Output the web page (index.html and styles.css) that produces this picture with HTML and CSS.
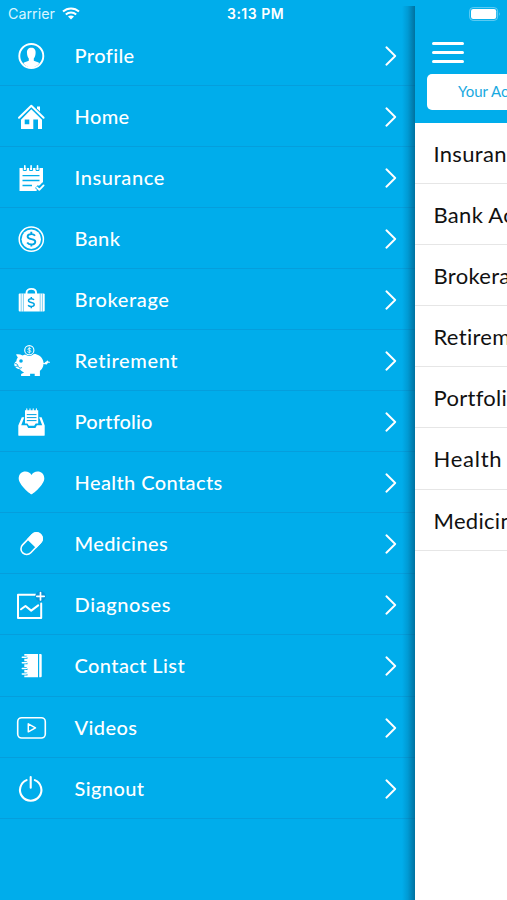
FILE: index.html
```html
<!DOCTYPE html>
<html lang="en">
<head>
<meta charset="utf-8">
<title>Menu</title>
<link rel="stylesheet" href="styles.css">
</head>
<body>
<svg class="defs" aria-hidden="true">
  <symbol id="chev" viewBox="0 0 12 20"><path d="M1.4 1.300 10.2 10 1.4 18.700" fill="none" stroke="#fff" stroke-width="1.9" stroke-linecap="round" stroke-linejoin="round"/></symbol>
</svg>
<div class="screen">
  <nav class="drawer">
    <div class="row"><svg class="icon" viewBox="0 0 40 40"><circle class="line" cx="20.3" cy="20" r="12" stroke-width="1.9"/><path d="M16 17c-.3-3.200 1.400-5.200 4.300-5.200s4.600 2 4.300 5.200c-.1 2.500-.8 4.400-1.800 5.500v2.200c1.600.8 3.800 1.100 5.500 2.200-1.800 2.800-4.800 4.600-8 4.600s-6.200-1.800-8-4.600c1.700-1.100 3.900-1.400 5.500-2.200v-2.200c-1-1.100-1.700-3-1.800-5.500z"/></svg><span class="label">Profile</span><svg class="chev"><use href="#chev"/></svg></div>
    <div class="row"><svg class="icon" viewBox="0 0 40 40"><path class="line" d="m8 20.800 12.300-12 12.300 12" stroke-width="2"/><path d="M26 9.500h3v5l-3-3z"/><path fill-rule="evenodd" d="m20.300 12.300 10.700 10.400V32h-4v-9.500h-4.700V32H10v-9.300zM13.700 22.500v4.700h4.600v-4.700z"/></svg><span class="label">Home</span><svg class="chev"><use href="#chev"/></svg></div>
    <div class="row"><svg class="icon" viewBox="0 0 40 40"><path d="M8.500 10H32v15.500l-5 3-1.500 4.500h-17z"/><g fill="none" stroke="#00adeb" stroke-width="1.300"><path d="M11.500 17.700h17M11.500 22.500h17M11.500 27.500h9.500"/><path d="M12.300 9v3.500h3V9M18.600 9v3.500h3V9M25 9v3.500h3V9" stroke-width="1"/></g><path class="line" d="M13.800 7.800v3M20.100 7.800v3M26.500 7.800v3" stroke-width="1.600"/><path d="m25.500 28.500 2.500 2.500 5-5.500" fill="none" stroke="#00adeb" stroke-width="4"/><path class="line" d="m26 29.500 2.300 2.300 4.300-4.400" stroke-width="1.800"/></svg><span class="label wide">Insurance</span><svg class="chev"><use href="#chev"/></svg></div>
    <div class="row"><svg class="icon" viewBox="0 0 40 40"><circle class="line" cx="20.300" cy="20.200" r="12.100" stroke-width="1.500"/><circle cx="20.300" cy="20.200" r="9.700"/><path class="cut" d="M24 16.800c-.8-1.200-2-1.700-3.700-1.700-2.200 0-3.700.9-3.700 2.500 0 3.600 7.700 1.500 7.700 5.200 0 1.700-1.600 2.700-4 2.700-1.900 0-3.300-.7-4.100-2M20.300 12.800v2.300M20.300 25.300v2.300" stroke-width="1.900"/></svg><span class="label">Bank</span><svg class="chev"><use href="#chev"/></svg></div>
    <div class="row"><svg class="icon" viewBox="0 0 40 40"><path class="line" d="M15.500 14.200v-1.300c0-2.500 2-4 4.800-4s4.800 1.500 4.800 4v1.300" stroke-width="1.900"/><rect x="7.700" y="13.600" width="26" height="18" rx="1"/><path class="cut" d="M10.200 13.500v18.200M12.400 13.500v18.200M29.200 13.500v18.200M31.400 13.500v18.200" stroke-width=".5"/><path class="cut" d="M23 19.900c-.5-.8-1.500-1.200-2.700-1.200-1.700 0-2.800.7-2.800 1.900 0 2.700 5.700 1.200 5.700 4 0 1.200-1.200 2-3 2-1.400 0-2.500-.5-3-1.500M20.300 17v1.700M20.300 26.600v1.700" stroke-width="1.500"/></svg><span class="label wide">Brokerage</span><svg class="chev"><use href="#chev"/></svg></div>
    <div class="row"><svg class="icon" viewBox="0 0 40 40"><path d="M5 13.500c2.500-.4 4.800 0 6.500 1 2.500-1.300 5.600-2 8.800-2 6.300 0 10.500 2.800 11.900 7.400 1 3.700-.3 7.600-3.300 9.900V35h-5.200v-2.300h-4.600V35h-9v-2l3-1.600c-2-.8-3.200-1.800-4.200-3.100-2.300-.2-4.300-1.300-5.300-3.300-.8-2 .1-4 1.800-4.800.1-1.500.7-2.700 1.400-3.600z"/><path class="line" d="M32 22.300c2 .6 3.600-.2 4.300-2m.1-.2c.1 2.300-1.100 3.300-2 2.500s1.200-2.500 3.900-1.300" stroke-width="1.200"/><circle cx="10" cy="20" r="1.800" fill="#00adeb"/><path class="cut" d="M3.500 26.200c1.200-1 2.700-1.100 4-.6.600 1.800 2.100 1.900 3.400.9M4.200 22.500c1.700.2 2.700 1 2.700 2.500" stroke-width=".9"/><circle cx="18.300" cy="9.200" r="5.900" fill="#00adeb"/><circle class="line" cx="18.300" cy="9.200" r="4.600" stroke-width="1.100"/><path class="line" d="M19.800 7.700c-1-.9-3-.5-2.900.6.100 1.300 3 .7 3 2s-2.200 1.500-3.300.5M18.300 6.200v6" stroke-width=".8"/></svg><span class="label wide">Retirement</span><svg class="chev"><use href="#chev"/></svg></div>
    <div class="row"><svg class="icon" viewBox="0 0 40 40"><path d="M10.800 15.300h2.500l-3.100 8h5.500l1.500 2.600h7.200l1.500-2.600h5.300l-3.100-8h2.500l3.100 8.300v9.300q0 .9-.9.900H8.200q-.9 0-.9-.9v-9.300z"/><path d="M14 8.200h13.200v13.300h-2.500l-1.500 2.300h-5.300l-1.500-2.300H14z"/><path class="cut" d="M15.800 12.600h9.700M15.800 15.600h9.700M15.800 18.600h9.700" stroke-width="1"/><path class="line" d="M15.800 6.900v2.300M19 6.900v2.300M22.200 6.900v2.300M25.400 6.900v2.300" stroke-width="1.100"/></svg><span class="label tight">Portfolio</span><svg class="chev"><use href="#chev"/></svg></div>
    <div class="row"><svg class="icon" viewBox="0 0 40 40"><path d="M20.500 31.200c-1.200 0-12.800-9.600-12.800-15.800 0-4.200 3.100-6.900 6.700-6.900 2.700 0 4.900 1.400 6.100 3.600 1.200-2.200 3.400-3.600 6.100-3.600 3.600 0 6.700 2.700 6.700 6.900 0 6.200-11.600 15.800-12.800 15.800z"/></svg><span class="label">Health Contacts</span><svg class="chev"><use href="#chev"/></svg></div>
    <div class="row"><svg class="icon" viewBox="0 0 40 40"><g transform="rotate(-46 20.600 19.700)"><rect class="line" x="7.800" y="14" width="25.600" height="11.400" rx="5.700" stroke-width="1.600"/><path d="M20.600 13.200h7.100a6.500 6.500 0 0 1 0 13h-7.100z"/></g></svg><span class="label">Medicines</span><svg class="chev"><use href="#chev"/></svg></div>
    <div class="row"><svg class="icon" viewBox="0 0 40 40"><path class="line" d="M24.500 9.700H7v23.200h23.200V18.500M10 24.300l4.500-3.300 5.700 4.600 7-5.200" stroke-width="2"/><circle cx="29.500" cy="11.200" r="5.200" fill="#0795d8"/><path class="line" d="M29.500 7.600v7.400M25.800 11.300h7.400" stroke-width="1.700"/></svg><span class="label wide">Diagnoses</span><svg class="chev"><use href="#chev"/></svg></div>
    <div class="row"><svg class="icon" viewBox="0 0 40 40"><path d="M13.300 8H27v23.300H13.300zM28.200 8h1.500q1 0 1 1v21.300q0 1-1 1h-1.500z"/><g stroke="#00adeb" stroke-width="3" fill="none"><path d="M12 11.200h4.500M12 16.800h4.500M12 22.400h4.500M12 28h4.500"/></g><path class="line" d="M11.300 11.200h3.200q2 0 2-1M11.300 16.800h3.200q2 0 2-1M11.300 22.400h3.200q2 0 2-1M11.300 28h3.200q2 0 2-1" stroke-width="1.500"/></svg><span class="label">Contact List</span><svg class="chev"><use href="#chev"/></svg></div>
    <div class="row"><svg class="icon" viewBox="0 0 40 40"><rect class="line" x="6.700" y="9.700" width="27.600" height="20.300" rx="4" stroke-width="1.600"/><path class="line" d="m17.300 15.800 7.200 4-7.200 4z" stroke-width="1.500"/></svg><span class="label">Videos</span><svg class="chev"><use href="#chev"/></svg></div>
    <div class="row"><svg class="icon" viewBox="0 0 40 40"><path class="line" d="M15.600 11.100a10.700 10.700 0 1 0 8.200 0M19.700 8v10.800" stroke-width="2.100"/></svg><span class="label">Signout</span><svg class="chev"><use href="#chev"/></svg></div>
  </nav>
  <main class="page">
    <header class="top">
      <div class="burger"><i></i><i></i><i></i></div>
      <div class="tab">Your Accounts</div>
    </header>
    <div class="item">Insurance</div>
    <div class="item">Bank Accounts</div>
    <div class="item">Brokerage</div>
    <div class="item">Retirement</div>
    <div class="item">Portfolio</div>
    <div class="item spaced">Health Contacts</div>
    <div class="item">Medicines</div>
  </main>
  <div class="status">
    <span class="carrier">Carrier</span>
    <svg class="wifi" viewBox="0 0 18 13"><g fill="none" stroke="#fff" stroke-width="2"><path d="M1 4.600c4.500-4.200 11.500-4.200 16 0M3.800 7.500c3-2.700 7.400-2.700 10.400 0"/></g><path d="M6 9.600c1.700-1.500 4.300-1.500 6 0l-3 3z" fill="#fff"/></svg>
    <span class="time">3:13 PM</span>
    <svg class="battery" viewBox="0 0 32 14"><rect x=".6" y=".6" width="28" height="12.800" rx="3.500" fill="none" stroke="#6fd0f5" stroke-width=".9"/><rect x="2" y="2" width="25.200" height="10" rx="2.200" fill="#fff"/><path d="M30 5q1.600 2 0 4z" fill="#6fd0f5"/></svg>
  </div>
</div>
</body>
</html>
```
FILE: styles.css
```css
* { box-sizing: border-box; }
body { margin: 0; background: #00adeb; font-family: Lato, "Open Sans", sans-serif; }
.defs { position: absolute; width: 0; height: 0; }
.screen { position: relative; display: flex; width: 507px; height: 900px; overflow: hidden; background: #00adeb; }
.drawer { flex: 0 0 415px; padding-top: 24.500px; }
.row { display: flex; align-items: center; height: 61.100px; padding: 2px 18px 0 11px; border-bottom: 1px solid #059edc; }
.icon { flex: none; width: 40px; height: 40px; margin-right: 23.500px; fill: #fff; overflow: visible; }
.line { fill: none; stroke: #fff; stroke-linejoin: round; stroke-linecap: round; }
.cut { fill: none; stroke: #00a3e2; }
.label { flex: 1; padding-bottom: 2px; color: #fff; font-size: 20px; font-weight: 500; letter-spacing: .4px; white-space: nowrap; }
.label.wide { letter-spacing: .62px; }
.label.tight { letter-spacing: .15px; }
.chev { flex: none; width: 12px; height: 20px; }
.page { position: relative; flex: none; width: 92px; height: 900px; background: #fff; }
.page::before { content: ""; position: absolute; left: -13px; top: 6px; width: 13px; height: 894px; background: linear-gradient(to right, rgba(0, 78, 120, 0), rgba(0, 78, 120, .2) 45%, rgba(0, 70, 105, .58)); }
.top { height: 123px; padding: 41.600px 0 0 12px; background: #00adeb; overflow: hidden; }
.burger { display: flex; flex-direction: column; gap: 6px; width: 32px; margin-left: 5px; }
.burger i { height: 3px; border-radius: 2px; background: #fff; }
.tab { width: 240px; height: 36px; margin-top: 11.400px; padding-left: 31px; border-radius: 5px; background: #fff; color: #18a9df; font-size: 15px; line-height: 35px; white-space: nowrap; }
.item { height: 61.100px; padding-left: 18.500px; border-bottom: 1px solid #e6e6e6; overflow: hidden; color: #111; font-size: 22px; line-height: 62px; letter-spacing: .3px; white-space: nowrap; }
.item.spaced { letter-spacing: .75px; }
.status { position: absolute; inset: 0 0 auto; display: flex; align-items: center; height: 27px; color: #fff; font-family: Inter, sans-serif; }
.carrier { width: 47px; margin-left: 8px; font-size: 14.300px; color: #d8f5ff; }
.wifi { width: 18px; height: 13px; margin-left: 7px; }
.time { width: 60px; margin-left: 147px; font-size: 14px; font-weight: 600; letter-spacing: .5px; white-space: nowrap; }
.battery { width: 32px; height: 14px; margin-left: 182px; }
```
